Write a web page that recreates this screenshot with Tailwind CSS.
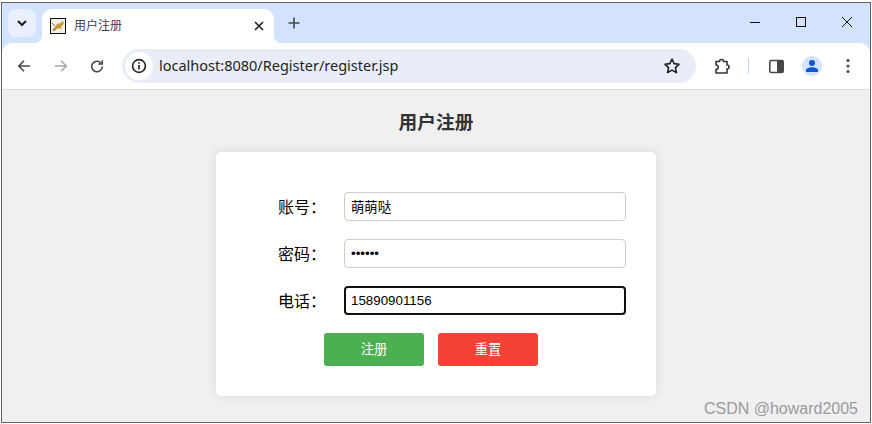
<!DOCTYPE html>
<html lang="zh-CN">
<head>
  <meta charset="UTF-8">
  <title>用户注册</title>
  <script src="https://cdn.jsdelivr.net/npm/@tailwindcss/browser@4"></script>
</head>
<body class="bg-white overflow-hidden font-['Liberation_Sans','Noto_Sans_CJK_SC',sans-serif]">
  <div class="w-[872px] h-[424px] pt-[2px] pl-px">
    <div class="relative w-[870px] h-[421px] border border-[#5f6368] flex flex-col overflow-hidden">

      <!-- tab strip -->
      <div class="h-[40px] shrink-0 bg-[#d3e3fd] flex items-start relative">
        <div class="ml-[6px] mt-[6px] w-[28px] h-[28px] rounded-lg bg-[#e9f0fd] flex items-center justify-center">
          <svg width="12" height="12" viewBox="0 0 12 12" fill="none" stroke="#1f1f1f" stroke-width="2"><path d="M2 4l4 4 4-4"/></svg>
        </div>
        <div class="relative ml-[6px] mt-[6px] w-[232px] h-[34px] bg-white rounded-t-[10px] flex items-center pl-[8px] pr-[10px] z-10">
          <span class="absolute -left-[8px] bottom-0 w-[8px] h-[8px] bg-[radial-gradient(circle_at_0_0,#d3e3fd_8px,#fff_8.5px)]"></span>
          <span class="absolute -right-[8px] bottom-0 w-[8px] h-[8px] bg-[radial-gradient(circle_at_100%_0,#d3e3fd_8px,#fff_8.5px)]"></span>
          <svg width="16" height="16" viewBox="0 0 16 16" class="shrink-0">
            <rect x="0.5" y="0.5" width="15" height="15" fill="#f4f1e6" stroke="#111"/>
            <path d="M2 12l3-3 2-3 4-1 1-2 1 1 1 0-1 3-2 2 1 3-2-2-3 1-2 1z" fill="#c99a3c"/>
            <path d="M2 5l3 3M3 13l3-2" stroke="#6b6b5c" fill="none"/>
          </svg>
          <span class="ml-[8px] text-[12px] text-[#3c4043] leading-none">用户注册</span>
          <svg width="10" height="10" viewBox="0 0 10 10" class="ml-auto" fill="none" stroke="#1f1f1f" stroke-width="1.6"><path d="M1 1l8 8M9 1l-8 8"/></svg>
        </div>
        <svg width="12" height="12" viewBox="0 0 12 12" class="ml-[14px] mt-[14px]" fill="none" stroke="#474747" stroke-width="1.6"><path d="M6 0.5v11M0.5 6h11"/></svg>
        <div class="ml-auto flex items-center mt-[14px] mr-[18px] gap-[36px]">
          <svg width="10" height="10" viewBox="0 0 10 10" fill="none" stroke="#111" stroke-width="1"><path d="M0 5.500h10"/></svg>
          <svg width="10" height="10" viewBox="0 0 10 10" fill="none" stroke="#111" stroke-width="1"><rect x="0.5" y="0.5" width="9" height="9"/></svg>
          <svg width="10" height="10" viewBox="0 0 10 10" fill="none" stroke="#111" stroke-width="1"><path d="M0 0l10 10M10 0L0 10"/></svg>
        </div>
      </div>

      <!-- toolbar -->
      <div class="h-[46px] shrink-0 bg-[#d3e3fd]">
        <div class="h-full bg-white rounded-t-[10px] flex items-center pl-[15px] pr-[20px]">
          <svg width="14" height="14" viewBox="0 0 16 16" fill="none" stroke="#474747" stroke-width="1.8"><path d="M15 8H2M8 2L2 8l6 6"/></svg>
          <svg width="14" height="14" viewBox="0 0 16 16" class="ml-[23px]" fill="none" stroke="#a8a8a8" stroke-width="1.8"><path d="M1 8h13M8 2l6 6-6 6"/></svg>
          <svg width="14" height="14" viewBox="0 0 16 16" class="ml-[22px]" fill="none" stroke="#474747" stroke-width="1.8"><path d="M13 5.200A6 6 0 1 0 14 8.500"/><path d="M14 1.500v4.300H9.700"/></svg>
          <div class="ml-[18px] w-[574px] h-[34px] rounded-full bg-[#e9edf8] flex items-center pl-[3px] pr-[15px]">
            <div class="w-[28px] h-[28px] rounded-full bg-white flex items-center justify-center">
              <svg width="16" height="16" viewBox="0 0 16 16" fill="none" stroke="#1f1f1f" stroke-width="1.6"><circle cx="8" cy="8" r="6.400"/><path d="M8 7v4.500M8 4.200v1.600"/></svg>
            </div>
            <span class="ml-[6px] text-[14.5px] text-[#1f1f1f] font-['Noto_Sans',sans-serif]">localhost:8080/Register/register.jsp</span>
            <svg width="18" height="18" viewBox="0 0 18 18" class="ml-auto" fill="none" stroke="#1f1f1f" stroke-width="1.6" stroke-linejoin="round"><path d="M9 2l2.100 4.600 5 .6-3.700 3.400 1 5L9 13.100l-4.400 2.500 1-5L1.900 7.200l5-.6z"/></svg>
          </div>
          <svg width="18" height="18" viewBox="0 0 18 18" class="ml-[18px]" fill="none" stroke="#333" stroke-width="1.6" stroke-linejoin="round"><path d="M2 4.500h3.500a2 2 0 0 1 4 0H13v3.500a2 2 0 0 1 0 4V16H2v-3.500a2.200 2.200 0 0 0 0-4.500z"/></svg>
          <div class="ml-[16px] w-px h-[16px] bg-[#c6d6f5]"></div>
          <svg width="15" height="15" viewBox="0 0 15 15" class="ml-[20px]"><rect x="0.800" y="1.500" width="13.400" height="12" rx="1.500" fill="#fff" stroke="#474747" stroke-width="1.600"/><rect x="8" y="1.500" width="6.200" height="12" fill="#474747"/></svg>
          <div class="ml-[18px] w-[20px] h-[20px] rounded-full bg-[#d3e3fd] flex items-center justify-center">
            <svg width="14" height="14" viewBox="0 0 14 14" fill="#0b57d0"><circle cx="7" cy="4" r="3"/><path d="M1 13v-1.500C1 9.500 4 8.300 7 8.300s6 1.200 6 3.200V13z"/></svg>
          </div>
          <svg width="4" height="16" viewBox="0 0 4 16" class="ml-auto" fill="#474747"><circle cx="2" cy="2.500" r="1.600"/><circle cx="2" cy="8" r="1.600"/><circle cx="2" cy="13.500" r="1.600"/></svg>
        </div>
      </div>

      <!-- page -->
      <div class="flex-1 bg-[#f0f0f0] border-t border-[#dcdcdc] flex flex-col items-center">
        <h3 class="mt-[20px] text-[18.72px] leading-[26px] font-bold text-[#333]">用户注册</h3>
        <div class="mt-[16px] w-[440px] h-[244px] bg-white rounded-[5px] shadow-[0_0_10px_rgba(0,0,0,0.1)] pt-[40px] pl-[62px]">
          <div class="flex items-center h-[29px]">
            <label class="w-[66px] pt-[2px] text-[16px] text-black">账号：</label>
            <input type="text" value="萌萌哒" class="w-[282px] h-[29px] border border-[#ccc] rounded-[4px] px-[6px] text-[13.33px] text-black bg-white">
          </div>
          <div class="flex items-center h-[29px] mt-[18px]">
            <label class="w-[66px] pt-[2px] text-[16px] text-black">密码：</label>
            <input type="password" value="123456" class="w-[282px] h-[29px] border border-[#ccc] rounded-[4px] px-[6px] text-[13.33px] text-black bg-white">
          </div>
          <div class="flex items-center h-[29px] mt-[18px]">
            <label class="w-[66px] pt-[2px] text-[16px] text-black">电话：</label>
            <input type="text" value="15890901156" class="w-[282px] h-[29px] border-2 border-[#101010] rounded-[4px] px-[5px] text-[13.33px] text-black bg-white">
          </div>
          <div class="flex mt-[18px] ml-[46px] gap-[14px]">
            <button class="w-[100px] h-[33px] rounded-[3px] bg-[#4caf50] text-white text-[13.33px]">注册</button>
            <button class="w-[100px] h-[33px] rounded-[3px] bg-[#f44336] text-white text-[13.33px]">重置</button>
          </div>
        </div>
      </div>

      <!-- watermark -->
      <span class="absolute right-[12px] bottom-[5px] text-[16px] leading-none text-[#9a9a9a]">CSDN @howard2005</span>
    </div>
  </div>
</body>
</html>
